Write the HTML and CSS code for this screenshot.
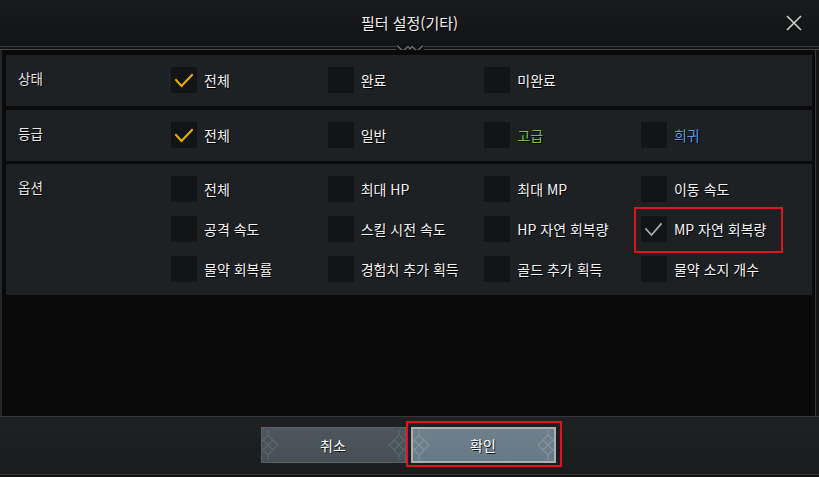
FILE: index.html
```html
<!DOCTYPE html>
<html lang="ko">
<head>
<meta charset="utf-8">
<title>필터 설정(기타)</title>
<link rel="stylesheet" href="styles.css">
</head>
<body>
<div class="dialog">
  <header class="header">
    <span class="spacer"></span>
    <h1 class="title">필터 설정(기타)</h1>
    <button class="close" aria-label="닫기">
      <svg width="16" height="16" viewBox="0 0 16 16"><path d="M1 1 L15 15 M15 1 L1 15" stroke="#cfd0d0" stroke-width="1.6" fill="none"/></svg>
    </button>
  </header>
  <div class="divider">
    <svg class="ornament" width="28" height="8" viewBox="0 0 28 8"><rect x="0" y="0" width="28" height="8" fill="#111213"/><polyline points="1,1.5 7,7 12,2.5 14,5 16,2.5 21,7 27,1.5" fill="none" stroke="#6d6e70" stroke-width="1.3"/></svg>
  </div>
  <main class="body">
    <section class="row">
      <div class="row-label">상태</div>
      <div class="options">
        <label class="item"><span class="box"><svg viewBox="0 0 26 26"><polyline class="check gold" points="5,13 10.5,19 21,8"/></svg></span><span class="txt">전체</span></label>
        <label class="item"><span class="box"></span><span class="txt">완료</span></label>
        <label class="item"><span class="box"></span><span class="txt">미완료</span></label>
      </div>
    </section>
    <section class="row">
      <div class="row-label">등급</div>
      <div class="options">
        <label class="item"><span class="box"><svg viewBox="0 0 26 26"><polyline class="check gold" points="5,13 10.5,19 21,8"/></svg></span><span class="txt">전체</span></label>
        <label class="item"><span class="box"></span><span class="txt">일반</span></label>
        <label class="item"><span class="box"></span><span class="txt green">고급</span></label>
        <label class="item"><span class="box"></span><span class="txt blue">희귀</span></label>
      </div>
    </section>
    <section class="row">
      <div class="row-label">옵션</div>
      <div class="options">
        <label class="item"><span class="box"></span><span class="txt">전체</span></label>
        <label class="item"><span class="box"></span><span class="txt">최대 HP</span></label>
        <label class="item"><span class="box"></span><span class="txt">최대 MP</span></label>
        <label class="item"><span class="box"></span><span class="txt">이동 속도</span></label>
        <label class="item"><span class="box"></span><span class="txt">공격 속도</span></label>
        <label class="item"><span class="box"></span><span class="txt">스킬 시전 속도</span></label>
        <label class="item"><span class="box"></span><span class="txt">HP 자연 회복량</span></label>
        <label class="item highlight"><span class="box"><svg viewBox="0 0 26 26"><polyline class="check grey" points="5,13 10.5,19 20,8"/></svg></span><span class="txt">MP 자연 회복량</span></label>
        <label class="item"><span class="box"></span><span class="txt">물약 회복률</span></label>
        <label class="item"><span class="box"></span><span class="txt">경험치 추가 획득</span></label>
        <label class="item"><span class="box"></span><span class="txt">골드 추가 획득</span></label>
        <label class="item"><span class="box"></span><span class="txt">물약 소지 개수</span></label>
      </div>
    </section>
  </main>
  <footer class="footer">
    <button class="btn cancel">
      <svg class="knot" viewBox="0 0 20 30"><path d="M-4 15 L6 5 L16 15 L6 25 Z M1 10 L11 20 M1 20 L11 10 M6 5 L6 0 M6 25 L6 30"/></svg>
      <span>취소</span>
      <svg class="knot" viewBox="0 0 20 30"><path d="M24 15 L14 5 L4 15 L14 25 Z M19 10 L9 20 M19 20 L9 10 M14 5 L14 0 M14 25 L14 30"/></svg>
    </button>
    <button class="btn ok">
      <svg class="knot" viewBox="0 0 20 30"><path d="M-4 15 L6 5 L16 15 L6 25 Z M1 10 L11 20 M1 20 L11 10 M6 5 L6 0 M6 25 L6 30"/></svg>
      <span>확인</span>
      <svg class="knot" viewBox="0 0 20 30"><path d="M24 15 L14 5 L4 15 L14 25 Z M19 10 L9 20 M19 20 L9 10 M14 5 L14 0 M14 25 L14 30"/></svg>
    </button>
  </footer>
</div>
</body>
</html>
```

FILE: styles.css
```css
* { box-sizing: border-box; }
html, body { margin: 0; padding: 0; }
body {
  width: 819px;
  height: 477px;
  overflow: hidden;
  background: #0a0a0a;
  font-family: "Noto Sans CJK KR", "Noto Sans", "Liberation Sans", sans-serif;
  color: #f0f0f0;
}
.dialog {
  width: 819px;
  height: 477px;
  display: flex;
  flex-direction: column;
  background: #141414;
}
.header {
  height: 46px;
  display: grid;
  grid-template-columns: 1fr auto 1fr;
  align-items: center;
  background: linear-gradient(180deg, #1a1b1c 0%, #151617 60%, #131415 100%);
}
.title {
  margin: 0;
  font-size: 15px;
  font-weight: 400;
  color: #f2f2f2;
  text-shadow: 1px 1px 0 #000;
  padding-bottom: 1px;
}
.close {
  justify-self: end;
  margin-right: 16px;
  width: 18px;
  height: 18px;
  padding: 1px;
  border: 0;
  background: transparent;
  display: flex;
  align-items: center;
  justify-content: center;
}
.divider {
  height: 4px;
  border-top: 1px solid #3a3b3c;
  border-bottom: 1px solid #48494a;
  background: #111213;
  display: flex;
  justify-content: center;
  align-items: center;
}
.ornament { display: block; margin-left: 0; }
.body {
  flex: 1;
  background: #0a0a0a;
  border-left: 2px solid #262728;
  border-right: 1px solid #363738;
  margin-right: 3px;
  padding: 5px 3px 0 4px;
  display: flex;
  flex-direction: column;
  gap: 3.5px;
}
.row {
  display: flex;
  background: #1e2124;
  padding: 12px 0 13px;
}
.row-label {
  width: 165px;
  flex: none;
  padding-left: 12px;
  font-size: 13.5px;
  line-height: 22px;
  color: #e6e6e6;
  text-shadow: 1px 1px 0 #000;
}
.options {
  display: grid;
  grid-template-columns: repeat(4, 156.67px);
  row-gap: 14px;
}
.item {
  display: flex;
  align-items: center;
  gap: 7px;
  height: 26px;
  font-size: 14px;
  position: relative;
}
.box {
  width: 26px;
  height: 26px;
  flex: none;
  background: #131416;
  display: block;
}
.box svg { width: 26px; height: 26px; display: block; }
.check { fill: none; stroke-width: 2; stroke-linecap: square; }
.check.gold { stroke: #e6b00c; }
.check.grey { stroke: #a8a9aa; stroke-width: 1.8; }
.txt {
  color: #f4f4f4;
  text-shadow: 1px 1px 0 #000;
  white-space: nowrap;
  line-height: 26px;
}
.txt.green { color: #72c24a; }
.txt.blue { color: #5b9ae6; }
.highlight::after {
  content: "";
  position: absolute;
  left: -7px;
  top: -9px;
  width: 145px;
  height: 42px;
  border: 2px solid #e4121c;
}
.footer {
  height: 59px;
  margin-bottom: 2px;
  border-top: 1px solid #363738;
  border-bottom: 1px solid #363738;
  background: linear-gradient(180deg, #1f2021 0%, #1b1c1d 100%);
  display: flex;
  justify-content: center;
  align-items: flex-start;
  gap: 5px;
  padding-top: 10px;
  padding-right: 3px;
}
.btn {
  width: 145px;
  height: 36px;
  display: flex;
  align-items: center;
  justify-content: space-between;
  padding: 0;
  font-family: inherit;
  font-size: 14px;
  color: #ffffff;
  text-shadow: 1px 1px 0 #1a1a1a;
  position: relative;
}
.btn span { flex: 1; text-align: center; }
.knot {
  width: 20px;
  height: 30px;
  flex: none;
  fill: none;
  stroke: #8e979d;
  stroke-width: 1.1;
  opacity: 0.3;
}
.cancel {
  background: linear-gradient(180deg, #4e555c 0%, #485057 100%);
  border: 1px solid #5c6368;
}
.ok {
  background: linear-gradient(180deg, #6f808c 0%, #687a87 100%);
  border: 2px solid #a9b0b4;
}
.ok .knot { stroke: #b7c0c6; opacity: 0.35; }
.ok::after {
  content: "";
  position: absolute;
  left: -7px;
  top: -8px;
  right: -8px;
  bottom: -6px;
  border: 2px solid #e4121c;
}
```
